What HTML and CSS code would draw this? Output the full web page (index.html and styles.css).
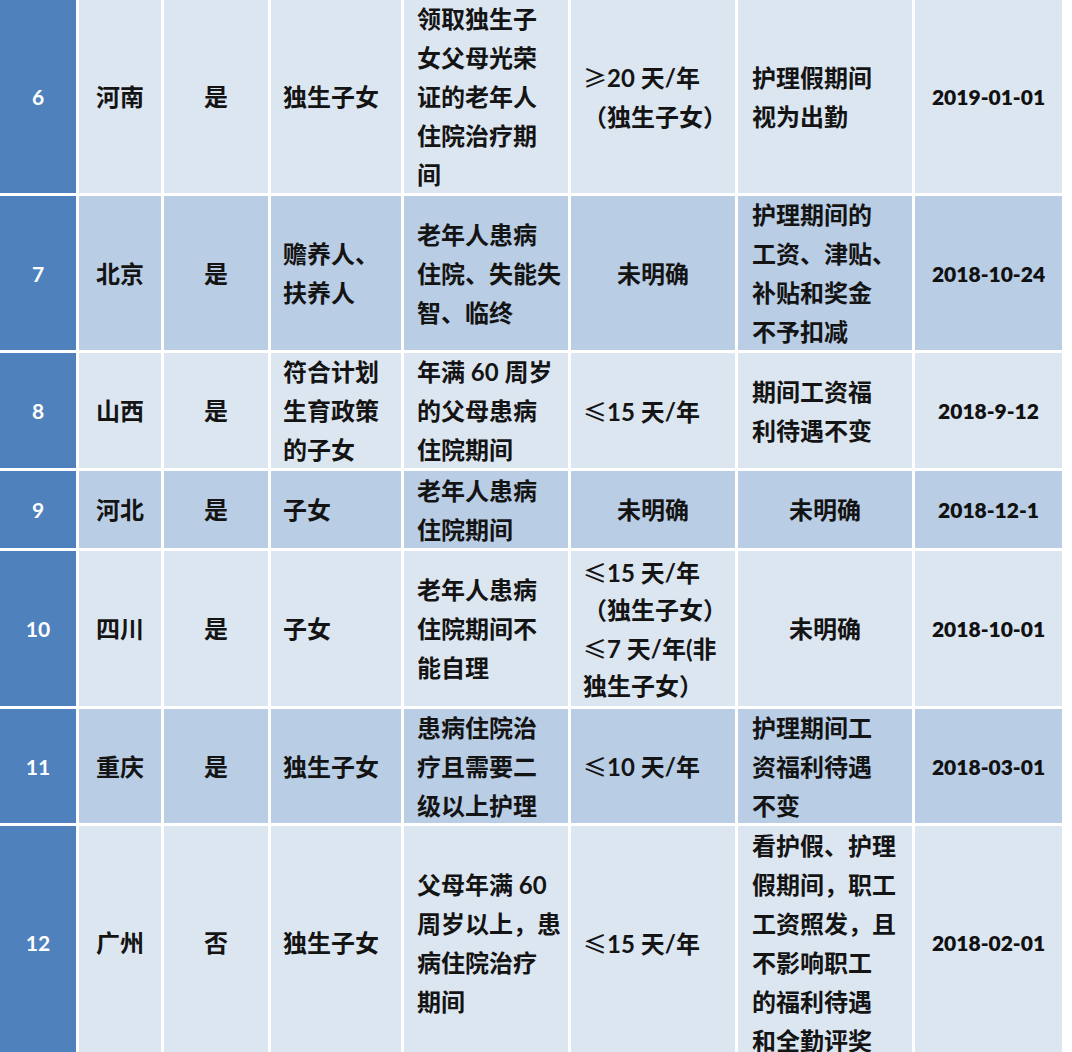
FILE: index.html
```html
<!DOCTYPE html>
<html lang="zh-CN">
<head>
<meta charset="utf-8">
<title>护理假政策对比表</title>
<link rel="stylesheet" href="styles.css">
</head>
<body>
<div class="sheet">
  <div class="row light">
    <div class="c idx"><span>6</span></div>
    <div class="c center"><span>河南</span></div>
    <div class="c center"><span>是</span></div>
    <div class="c left"><span>独生子女</span></div>
    <div class="c left p5"><span>领取独生子<br>女父母光荣<br>证的老年人<br>住院治疗期<br>间</span></div>
    <div class="c left"><span><span class="sym">≥</span><b>20</b> 天<b>/</b>年<br>（独生子女）</span></div>
    <div class="c left p7"><span>护理假期间<br>视为出勤</span></div>
    <div class="c center date"><span>2019-01-01</span></div>
  </div>
  <div class="row dark">
    <div class="c idx"><span>7</span></div>
    <div class="c center"><span>北京</span></div>
    <div class="c center"><span>是</span></div>
    <div class="c left"><span>赡养人、<br>扶养人</span></div>
    <div class="c left p5"><span>老年人患病<br>住院、失能失<br>智、临终</span></div>
    <div class="c center"><span>未明确</span></div>
    <div class="c left p7"><span>护理期间的<br>工资、津贴、<br>补贴和奖金<br>不予扣减</span></div>
    <div class="c center date"><span>2018-10-24</span></div>
  </div>
  <div class="row light">
    <div class="c idx"><span>8</span></div>
    <div class="c center"><span>山西</span></div>
    <div class="c center"><span>是</span></div>
    <div class="c left"><span>符合计划<br>生育政策<br>的子女</span></div>
    <div class="c left p5"><span>年满 <b>60</b> 周岁<br>的父母患病<br>住院期间</span></div>
    <div class="c left"><span><span class="sym">≤</span><b>15</b> 天<b>/</b>年</span></div>
    <div class="c left p7"><span>期间工资福<br>利待遇不变</span></div>
    <div class="c center date"><span>2018-9-12</span></div>
  </div>
  <div class="row dark">
    <div class="c idx"><span>9</span></div>
    <div class="c center"><span>河北</span></div>
    <div class="c center"><span>是</span></div>
    <div class="c left"><span>子女</span></div>
    <div class="c left p5"><span>老年人患病<br>住院期间</span></div>
    <div class="c center"><span>未明确</span></div>
    <div class="c center"><span>未明确</span></div>
    <div class="c center date"><span>2018-12-1</span></div>
  </div>
  <div class="row light">
    <div class="c idx"><span>10</span></div>
    <div class="c center"><span>四川</span></div>
    <div class="c center"><span>是</span></div>
    <div class="c left"><span>子女</span></div>
    <div class="c left p5"><span>老年人患病<br>住院期间不<br>能自理</span></div>
    <div class="c left tight"><span><span class="sym">≤</span><b>15</b> 天<b>/</b>年<br>（独生子女）<br><span class="sym">≤</span><b>7</b> 天<b>/</b>年<b>(</b>非<br>独生子女）</span></div>
    <div class="c center"><span>未明确</span></div>
    <div class="c center date"><span>2018-10-01</span></div>
  </div>
  <div class="row dark">
    <div class="c idx"><span>11</span></div>
    <div class="c center"><span>重庆</span></div>
    <div class="c center"><span>是</span></div>
    <div class="c left"><span>独生子女</span></div>
    <div class="c left p5"><span>患病住院治<br>疗且需要二<br>级以上护理</span></div>
    <div class="c left"><span><span class="sym">≤</span><b>10</b> 天<b>/</b>年</span></div>
    <div class="c left p7"><span>护理期间工<br>资福利待遇<br>不变</span></div>
    <div class="c center date"><span>2018-03-01</span></div>
  </div>
  <div class="row light">
    <div class="c idx"><span>12</span></div>
    <div class="c center"><span>广州</span></div>
    <div class="c center"><span>否</span></div>
    <div class="c left"><span>独生子女</span></div>
    <div class="c left p5"><span>父母年满 <b>60</b><br>周岁以上，患<br>病住院治疗<br>期间</span></div>
    <div class="c left"><span><span class="sym">≤</span><b>15</b> 天<b>/</b>年</span></div>
    <div class="c left p7"><span>看护假、护理<br>假期间，职工<br>工资照发，且<br>不影响职工<br>的福利待遇<br>和全勤评奖</span></div>
    <div class="c center date"><span>2018-02-01</span></div>
  </div>
</div>
</body>
</html>
```
FILE: styles.css
```css
html, body {
  margin: 0;
  padding: 0;
  background: #ffffff;
  overflow: hidden;
}

.sheet {
  display: grid;
  grid-template-columns: 76px 82px 104px 130px 164px 164px 174px 147px;
  grid-template-rows: 193px 154px 115px 77px 155px 114px 233px;
  gap: 3px;
  width: 1062px;
  background: #ffffff;
  font-family: "Lato", "Noto Sans CJK SC", sans-serif;
  font-size: 24px;
  line-height: 39px;
  font-weight: 700;
  color: #141414;
}

.row {
  display: contents;
}

.c {
  display: flex;
  align-items: center;
  white-space: nowrap;
  min-height: 0;
  overflow: visible;
}

.row.light > .c {
  background: #dce6f1;
}

.row.dark > .c {
  background: #b9cde5;
}

.row > .c.idx {
  background: #4f81bd;
  color: #ffffff;
  font-family: "Lato", sans-serif;
  font-weight: 700;
  font-size: 21px;
  justify-content: center;
}

.center {
  justify-content: center;
  text-align: center;
}

.left {
  padding-left: 12px;
}

.p5 {
  padding-left: 13px;
}

.p7 {
  padding-left: 14px;
}

.tight {
  line-height: 37.5px;
}

.date {
  font-family: "Lato", sans-serif;
  font-weight: 800;
  font-size: 21px;
  color: #111111;
}

b {
  font-family: "Lato", sans-serif;
  font-weight: 700;
}

.sym {
  font-family: "Noto Sans CJK SC", sans-serif;
  font-weight: 500;
}
```
